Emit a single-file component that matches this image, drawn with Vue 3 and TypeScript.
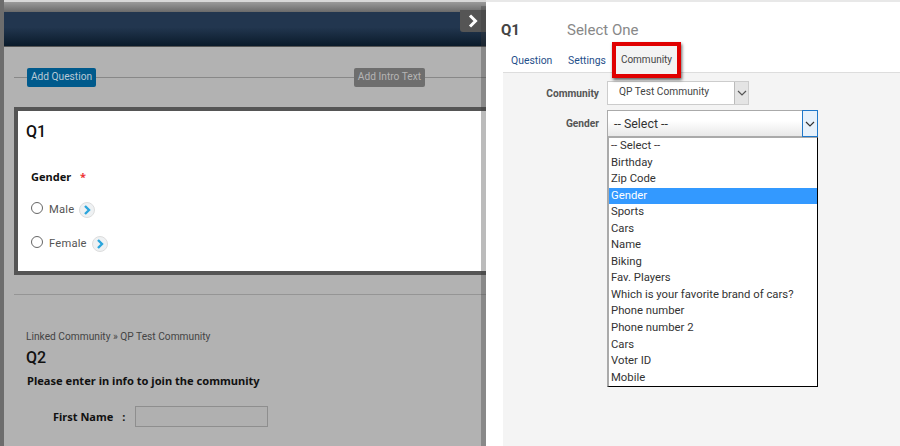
<script setup lang="ts">
const options: string[] = ['-- Select --','Birthday','Zip Code','Gender','Sports','Cars','Name','Biking','Fav. Players','Which is your favorite brand of cars?','Phone number','Phone number 2','Cars','Voter ID','Mobile']
</script>

<template>
  <div class="root">
    <section class="left">
      <div class="topstrip"></div>
      <header class="navy">
        <button class="toggle" type="button">
          <svg width="14" height="14" viewBox="0 0 14 14"><path d="M4 1.5 L9.5 7 L4 12.5" fill="none" stroke="#fff" stroke-width="3"/></svg>
        </button>
      </header>
      <div class="canvas">
        <div class="addrow">
          <span class="seg s1"></span><span class="btn blue">Add Question</span><span class="seg s2"></span><span class="btn grey">Add Intro Text</span><span class="seg s3"></span>
        </div>
        <div class="card">
          <h2 class="q">Q1</h2>
          <div class="qlabel">Gender <span class="req">*</span></div>
          <div class="radio r1"><i class="dot"></i><span>Male</span><em class="chev"><svg width="10" height="10" viewBox="0 0 10 10"><path d="M3 1 L7 5 L3 9" fill="none" stroke="#2aa5dc" stroke-width="2.4"/></svg></em></div>
          <div class="radio r2"><i class="dot"></i><span>Female</span><em class="chev"><svg width="10" height="10" viewBox="0 0 10 10"><path d="M3 1 L7 5 L3 9" fill="none" stroke="#2aa5dc" stroke-width="2.4"/></svg></em></div>
        </div>
        <div class="rule"></div>
        <div class="linked">Linked Community » QP Test Community</div>
        <h2 class="q2">Q2</h2>
        <div class="please">Please enter in info to join the community</div>
        <div class="fname"><b>First Name</b><b class="colon">:</b><span class="inp"></span></div>
      </div>
      <div class="scrollshade"></div>
    </section>
    <section class="right">
      <div class="title"><strong>Q1</strong><span>Select One</span></div>
      <nav class="tabs">
        <a class="tab t1">Question</a>
        <a class="tab t2">Settings</a>
        <a class="tab active">Community</a>
      </nav>
      <div class="panel">
        <div class="frow f1">
          <label>Community</label>
          <div class="sel small"><span class="txt">QP Test Community</span><span class="arrow"><svg width="10" height="6" viewBox="0 0 10 6"><path d="M1 1 L5 5 L9 1" fill="none" stroke="#555" stroke-width="1.2"/></svg></span></div>
        </div>
        <div class="frow f2">
          <label>Gender</label>
          <div class="sel open"><span class="txt">-- Select --</span><span class="arrow"><svg width="10" height="6" viewBox="0 0 10 6"><path d="M1 1 L5 5 L9 1" fill="none" stroke="#333" stroke-width="1.2"/></svg></span>
            <ul class="menu">
              <li v-for="(o, i) in options" :key="i" :class="{ hi: o === 'Gender' }">{{ o }}</li>
            </ul>
          </div>
        </div>
      </div>
    </section>
  </div>
</template>

<style>
html, body { margin: 0; background: #fff; overflow: hidden; }
</style>

<style scoped>
.root { width: 900px; height: 446px; display: flex; overflow: hidden; font-family: Roboto, sans-serif; }
.left { position: relative; width: 486px; height: 446px; flex: none; background: #b2b2b2; border-left: 4px solid #6d6d6d; box-sizing: border-box; overflow: hidden; }
.topstrip { height: 10px; margin: 2px 0 0 -4px; background: linear-gradient(#9a9a9a, #6a6a6a); }
.left::before { content: ""; position: absolute; left: -4px; right: 0; top: 0; height: 2px; background: #d8d8d8; }
.navy { position: relative; height: 35px; background: linear-gradient(#22364f 0, #22364f 45%, #0a1a2a 100%); border-bottom: 1px solid #555; box-sizing: border-box; }
.toggle { position: absolute; right: 0; top: -2px; width: 26px; height: 22px; padding: 0; background: #555; border: 0; border-radius: 0 0 0 3px; display: flex; align-items: center; justify-content: center; }
.canvas { padding: 0 0 0 10px; }
.addrow { display: flex; align-items: center; height: 20px; margin-top: 20px; }
.seg { height: 1px; background: #888; }
.s1 { width: 13px; }
.s2 { width: 258px; }
.s3 { flex: 1; }
.btn { height: 19px; line-height: 18px; font-size: 10.2px; color: #b9c9d6; text-align: center; border-radius: 2px; box-sizing: border-box; white-space: nowrap; }
.blue { width: 69px; background: #005a8c; }
.grey { width: 71px; background: #6e6e6e; color: #b5b5b5; }
.card { position: relative; height: 168px; margin-top: 20px; background: #fff; border: 4px solid #555; border-right: 0; box-sizing: border-box; }
.q { margin: 0; padding: 11px 0 0 8px; font-size: 16px; line-height: 20px; font-weight: 500; color: #111; }
.qlabel { margin: 27px 0 0 13px; font-family: "Noto Sans", sans-serif; font-size: 11px; line-height: 16px; font-weight: 700; color: #111; }
.req { color: #e33; margin-left: 6px; }
.radio { display: flex; align-items: center; margin-left: 13px; font-size: 11.2px; letter-spacing: .2px; color: #555; }
.r1 { margin-top: 14px; height: 20px; }
.r2 { margin-top: 14px; height: 20px; }
.dot { width: 10px; height: 10px; border: 1px solid #666; border-radius: 50%; margin-right: 6px; margin-top: -3px; }
.chev { display: flex; align-items: center; justify-content: center; width: 16px; height: 16px; margin-left: 5px; background: #eef1f3; border: 1px solid #ddd; border-radius: 50%; box-sizing: border-box; margin-top: 1px; }
.rule { height: 1px; background: #959595; margin-top: 19px; }
.linked { margin: 34px 0 0 12px; font-size: 10.2px; line-height: 16px; color: #444; }
.q2 { margin: 3px 0 0 12px; font-size: 16px; line-height: 20px; font-weight: 500; color: #111; }
.please { margin: 5px 0 0 13px; font-family: "Noto Sans", sans-serif; font-size: 11.1px; line-height: 16px; font-weight: 700; color: #111; }
.fname { display: flex; align-items: center; margin: 17px 0 0 39px; font-family: "Noto Sans", sans-serif; font-size: 11px; color: #111; }
.colon { margin-left: 9px; }
.inp { width: 133px; height: 21px; margin-left: 10px; background: #b0b0b0; border: 1px solid #8e8e8e; box-sizing: border-box; }
.scrollshade { position: absolute; right: 0; top: 6px; bottom: 0; width: 5px; background: rgba(60,60,60,.35); }
.right { flex: 1; min-width: 0; background: #fff; border-top: 2px solid #e8e8e8; box-sizing: border-box; color: #444; }
.title { display: flex; align-items: center; height: 24px; margin: 16px 0 0 15px; }
.title strong { width: 66px; font-size: 15px; font-weight: 700; color: #444; }
.title span { font-size: 15px; color: #888; }
.tabs { display: flex; align-items: flex-end; height: 30px; margin-left: 17px; }
.tab { font-size: 10.4px; color: #1f4f8a; line-height: 20px; }
.t1 { margin: 0 0 1px 8px; width: 57px; }
.t2 { width: 44px; margin-bottom: 1px; }
.active { position: relative; z-index: 1; align-self: flex-start; width: 69px; height: 36px; line-height: 28px; text-align: center; color: #444; border: 4px solid #e00000; box-sizing: border-box; background: #f3f3f3; box-shadow: 1px 2px 3px rgba(0,0,0,.6); font-size: 10px; }
.panel { height: 374px; margin-left: 17px; background: #f4f4f4; border-top: 1px solid #ddd; box-sizing: border-box; padding-top: 8px; }
.frow { display: flex; align-items: center; }
.frow label { width: 96px; text-align: right; margin-right: 8px; font-size: 10.2px; font-weight: 700; color: #555; }
.f2 { margin-top: 5px; }
.sel { position: relative; display: flex; background: #fff; box-sizing: border-box; }
.small { width: 142px; height: 24px; border: 1px solid #ccc; }
.small .txt { flex: 1; font-size: 10.2px; line-height: 20px; padding-left: 11px; color: #444; }
.small .arrow { width: 13px; background: #e4e4e4; border-left: 1px solid #bbb; display: flex; align-items: center; justify-content: center; }
.open { width: 211px; height: 27px; border: 1px solid #aaa; background: linear-gradient(#fff 40%, #e8e8e8); }
.open .txt { flex: 1; font-size: 12.4px; line-height: 25px; padding-left: 6px; color: #333; }
.open .arrow { width: 14px; background: #e7f1fb; border: 1px solid #1f77c9; margin: -1px; display: flex; align-items: center; justify-content: center; }
.menu { position: absolute; left: -1px; top: 26px; width: 211px; height: 250px; margin: 0; padding: 0; list-style: none; background: #fff; border: 1px solid #000; border-left: 2px solid #aaa; border-top: 1px solid #aaa; box-sizing: border-box; }
.menu li { height: 16.55px; line-height: 15px; padding-left: 2px; font-size: 11.3px; color: #333; white-space: nowrap; }
.menu .hi { background: #3399ff; color: #fff; }
</style>
